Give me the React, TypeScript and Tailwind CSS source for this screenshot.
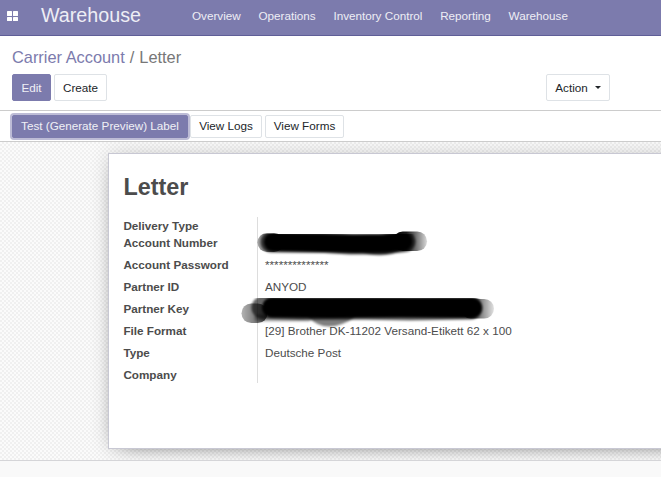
import type { ReactNode } from 'react';

const menus = ['Overview', 'Operations', 'Inventory Control', 'Reporting', 'Warehouse'];

const fields = [
  { label: 'Delivery Type', value: '', row: 'h-[17px]' },
  { label: 'Account Number', value: '', row: 'h-[22px]' },
  { label: 'Account Password', value: '**************', row: 'h-[22px]' },
  { label: 'Partner ID', value: 'ANYOD', row: 'h-[22px]' },
  { label: 'Partner Key', value: '', row: 'h-[22px]' },
  { label: 'File Format', value: '[29] Brother DK-11202 Versand-Etikett 62 x 100', row: 'h-[22px]' },
  { label: 'Type', value: 'Deutsche Post', row: 'h-[22px]' },
  { label: 'Company', value: '', row: 'h-[17px]' },
];

function Button({ children, className }: { children: ReactNode; className: string }) {
  return (
    <button className={`flex shrink-0 items-center justify-center whitespace-nowrap rounded-[2px] border ${className}`}>
      {children}
    </button>
  );
}

// Brush strokes covering the private account number and partner key.
function Redactions() {
  return (
    <svg className="pointer-events-none absolute left-0 top-0" width="661" height="477" viewBox="0 0 661 477" aria-hidden="true">
      <defs>
        <filter id="soft" x="-10%" y="-50%" width="120%" height="200%">
          <feGaussianBlur stdDeviation="1" />
        </filter>
        <filter id="softEnd" x="-20%" y="-20%" width="140%" height="140%">
          <feGaussianBlur stdDeviation="0.7" />
        </filter>
        <linearGradient id="fadeOut">
          <stop offset="0" stopColor="#000" />
          <stop offset="0.4" stopColor="#000" stopOpacity="0.9" />
          <stop offset="1" stopColor="#000" stopOpacity="0.15" />
        </linearGradient>
        <linearGradient id="fadeIn">
          <stop offset="0" stopColor="#000" stopOpacity="0.35" />
          <stop offset="1" stopColor="#000" stopOpacity="0.85" />
        </linearGradient>
      </defs>
      <g strokeLinecap="round" strokeLinejoin="round" fill="none">
        <g filter="url(#softEnd)">
          <rect x="257.5" y="233" width="26" height="19" rx="9.5" fill="url(#fadeIn)" />
          <rect x="393" y="231.5" width="34" height="19.5" rx="9.75" fill="url(#fadeOut)" />
        </g>
        <g filter="url(#soft)">
          <path d="M271 242 L325 242.500 L350 244 L380 244 L405 241.500" stroke="#000" strokeOpacity="0.65" strokeWidth="21" />
          <path d="M273 242 L320 243 L355 244 L385 243.500 L403 241.500" stroke="#050505" strokeWidth="18" />
          <path d="M358 251 Q382 261 408 248" fill="#000" fillOpacity="0.55" />
        </g>
        <g filter="url(#softEnd)">
          <rect x="241.5" y="303.5" width="26" height="19.5" rx="9.75" fill="url(#fadeIn)" fillOpacity="0.85" />
          <rect x="461" y="299" width="33" height="19.5" rx="9.75" fill="url(#fadeOut)" fillOpacity="0.75" />
        </g>
        <g filter="url(#soft)">
          <path d="M263 307.500 L300 308.500 L350 308 L410 309 L471 308" stroke="#000" strokeOpacity="0.6" strokeWidth="23" />
          <path d="M272 307.500 L330 308 L400 307.500 L472 308" stroke="#000" strokeWidth="20" />
          <path d="M308 317 Q326 336 356 317" fill="#000" fillOpacity="0.5" />
          <path d="M258 318 L308 318" stroke="#000" strokeOpacity="0.3" strokeWidth="7" />
        </g>
      </g>
    </svg>
  );
}

export default function App() {
  return (
    <div className="relative flex h-[477px] w-[661px] flex-col overflow-hidden bg-white font-['Liberation_Sans',Arial,sans-serif] text-[11.7px] leading-[17px] text-[#4c4c4c]">
      <header className="flex h-9 shrink-0 items-start border-b border-[#5f5e97] bg-[#7c7bad] text-[#eeeef5]">
        <div className="ml-[7px] mt-[11px] grid grid-cols-2 gap-px">
          <i className="h-[4.5px] w-[5px] rounded-[0.5px] bg-white" />
          <i className="h-[4.5px] w-[5px] rounded-[0.5px] bg-white" />
          <i className="h-[4.5px] w-[5px] rounded-[0.5px] bg-white" />
          <i className="h-[4.5px] w-[5px] rounded-[0.5px] bg-white" />
        </div>
        <div className="ml-[23px] mt-[2px] w-[151px] text-[19.7px] leading-[26px]">Warehouse</div>
        <nav className="mt-[7px] flex gap-[17.75px] whitespace-nowrap">
          {menus.map((m) => <span key={m}>{m}</span>)}
        </nav>
      </header>

      <section className="flex h-[75px] shrink-0 flex-col border-b border-[#cccccc] pl-3">
        <div className="mt-[11px] flex h-[27px] gap-[5px] whitespace-pre text-[16.38px] leading-[20px] text-[#777777]">
          <span className="text-[#7c7bad]">Carrier Account</span>
          <span>/</span>
          <span>Letter</span>
        </div>
        <div className="flex h-[27px] text-[#212529]">
          <Button className="w-[39px] border-[#7c7bad] bg-[#7c7bad] text-[#f0f0f6]">Edit</Button>
          <Button className="ml-[3px] w-[53px] border-[#dee2e6] bg-white">Create</Button>
          <Button className="ml-[439px] w-[64px] gap-[7px] border-[#dee2e6] bg-white">
            Action
            <i className="border-x-[3px] border-t-[3px] border-x-transparent border-t-[#212529]" />
          </Button>
        </div>
      </section>

      <section className="flex h-[31px] shrink-0 items-center border-b border-[#cccccc] pl-3 text-[#212529]">
        <Button className="h-[23px] w-[176px] border-[#7c7bad] bg-[#7c7bad] pb-px text-[#f0f0f6] shadow-[0_0_0_2px_#bdbcd6]">
          Test (Generate Preview) Label
        </Button>
        <Button className="ml-[2px] h-[23px] w-[72px] border-[#dee2e6] bg-white pb-px">View Logs</Button>
        <Button className="ml-[3px] h-[23px] w-[79px] border-[#dee2e6] bg-white pb-px">View Forms</Button>
      </section>

      <main className="h-[319px] shrink-0 overflow-hidden border-b border-[#d5d5d8] bg-[repeating-conic-gradient(#f0f0f0_0_25%,#fbfbfb_0_50%)] bg-[length:4px_4px] pl-[108px] pt-[11px]">
        <div className="h-[296px] w-[600px] border border-[#c8c8d3] bg-white pl-[14.4px] pt-[19px] shadow-[0_5px_20px_-15px_#000,0_0_18px_rgba(0,0,0,0.14)]">
          <h1 className="h-[44px] text-[23.4px] font-bold leading-[28px]">Letter</h1>
          <div className="flex flex-col">
            {fields.map((f) => (
              <div key={f.label} className={`flex ${f.row}`}>
                <div className="w-[134.6px] shrink-0 border-r border-[#dddddd] font-bold">{f.label}</div>
                <div className="whitespace-nowrap pl-[7px]">{f.value}</div>
              </div>
            ))}
          </div>
        </div>
      </main>
      <footer className="flex-1 bg-[#f9f9f9]" />
      <Redactions />
    </div>
  );
}
